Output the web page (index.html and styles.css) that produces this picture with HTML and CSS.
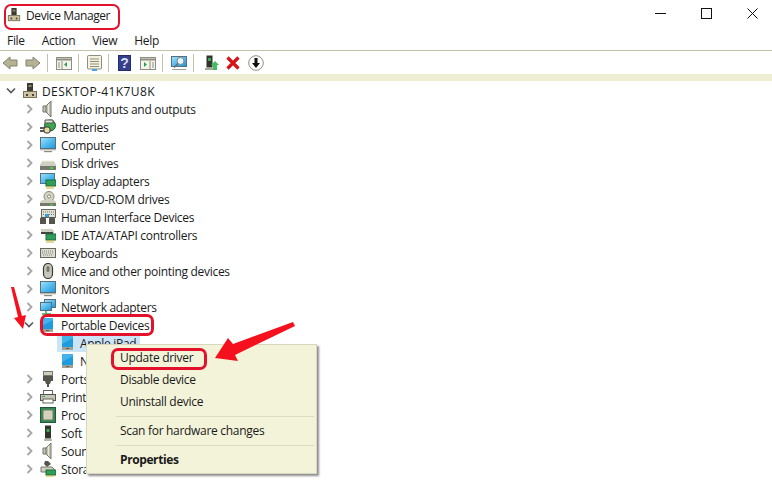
FILE: index.html
```html
<!DOCTYPE html>
<html lang="en">
<head>
<meta charset="utf-8">
<title>Device Manager</title>
<link rel="stylesheet" href="styles.css">
</head>
<body>
<svg width="0" height="0" class="defs">
  <defs>
    <linearGradient id="scr" x1="0" y1="0" x2="1" y2="1"><stop offset="0" stop-color="#a5e2fa"/><stop offset=".55" stop-color="#4fb9ec"/><stop offset="1" stop-color="#1f93d8"/></linearGradient>
    <symbol id="host" viewBox="0 0 16 16">
      <rect x="5" y="0" width="6" height="8" fill="#3c3a30"/>
      <rect x="6.500" y="2" width="3" height="2" fill="#8a8a70"/>
      <rect x="1.500" y="8.500" width="13" height="6" fill="#cfc39f" stroke="#77705a"/>
      <rect x="4" y="11" width="2" height="2" fill="#444"/><rect x="10" y="11" width="2" height="2" fill="#444"/>
    </symbol>
    <symbol id="chev" viewBox="0 0 8 10"><path d="M1.500 1l4 4-4 4" fill="none" stroke="#a6a6a6" stroke-width="1.800"/></symbol>
    <symbol id="chevd" viewBox="0 0 10 8"><path d="M1 1.500l4 4 4-4" fill="none" stroke="#595959" stroke-width="1.700"/></symbol>
    <symbol id="speaker" viewBox="0 0 16 16"><path d="M3 5h3l5-5v16l-5-5H3z" fill="#c4c4b6" stroke="#77776c"/><path d="M6 5v6" stroke="#6a6a60"/><path d="M8.500 3v10" stroke="#e8e8dc"/></symbol>
    <symbol id="battery" viewBox="0 0 16 16"><ellipse cx="10" cy="6.500" rx="5.500" ry="5.500" fill="#3fa552" stroke="#24542e"/><path d="M5 1h8v3H5z" fill="#dfe8d8" stroke="#555"/><path d="M0 9h5M0 12h5" stroke="#222" stroke-width="1.400"/><rect x="4" y="8" width="6" height="6" rx="2" fill="#e8d9a8" stroke="#333"/></symbol>
    <symbol id="monitor" viewBox="0 0 16 16"><rect x="0.500" y="0.500" width="15" height="11" fill="url(#scr)" stroke="#57707f"/><rect x="0" y="12" width="16" height="1.400" fill="#b8b8b0"/><rect x="4" y="14" width="8" height="1.200" fill="#8a8a80"/></symbol>
    <symbol id="disk" viewBox="0 0 16 16"><path d="M2 6h12l2 4v5H0v-5z" fill="#cfcfc0"/><rect x="0" y="11" width="16" height="4" fill="#77776c"/><rect x="10" y="12" width="3" height="2" fill="#3fd052"/><path d="M2 6h12" stroke="#eeeee4"/></symbol>
    <symbol id="display" viewBox="0 0 16 16"><rect x="0.500" y="0.500" width="14" height="10" fill="url(#scr)" stroke="#57707f"/><rect x="6" y="7" width="10" height="6" fill="#2f9e58" stroke="#1e6a3a"/><path d="M7 13v3M9 13v3M11 13v3M13 13v3" stroke="#c9b33a"/></symbol>
    <symbol id="dvd" viewBox="0 0 16 16"><circle cx="9" cy="5.500" r="5" fill="#d6d4c4" stroke="#8a8a78"/><circle cx="9" cy="5.500" r="1.600" fill="#fff" stroke="#8a8a78"/><path d="M2 9h12l2 2v4H0v-4z" fill="#cfcfc0"/><rect x="0" y="12" width="16" height="3" fill="#77776c"/><rect x="10" y="13" width="3" height="1.500" fill="#3fd052"/></symbol>
    <symbol id="hid" viewBox="0 0 16 16"><rect x="1.500" y="0.500" width="14" height="8" fill="#e0e0d4" stroke="#6a6a60"/><path d="M3 3h11M3 5.500h11" stroke="#77776c" stroke-dasharray="1 1"/><path d="M0 15V10c0-2 2-2 3-2s3 0 3 2v5zM9 15V10c0-2 2-2 3-2s3 0 3 2v5z" fill="#55554d"/><rect x="5" y="5" width="4" height="3" fill="#3a9bdc"/></symbol>
    <symbol id="ide" viewBox="0 0 16 16"><path d="M1 2h11l2 2v3H1z" fill="#cfcfc0"/><rect x="1" y="5" width="12" height="2" fill="#44443c"/><rect x="6" y="7" width="10" height="6" fill="#2f9e58" stroke="#1e6a3a"/><path d="M7 13v3M9 13v3M11 13v3M13 13v3" stroke="#c9b33a"/></symbol>
    <symbol id="keyboard" viewBox="0 0 16 16"><rect x="0.500" y="3.500" width="15" height="9" fill="#dcdcd0" stroke="#66665c"/><path d="M2 6h12M2 8h12M3 10h10" stroke="#85857a" stroke-dasharray="1 1"/></symbol>
    <symbol id="mouse" viewBox="0 0 16 16"><rect x="3.500" y="0.500" width="9" height="15" rx="4.500" fill="#c6c6ba" stroke="#3a3a34" stroke-width="1.200"/><rect x="6.500" y="3" width="3" height="6" rx="1.500" fill="#77776c"/></symbol>
    <symbol id="network" viewBox="0 0 16 16"><rect x="4.500" y="0.500" width="11" height="8" fill="url(#scr)" stroke="#57707f"/><rect x="0.500" y="3.500" width="11" height="8" fill="url(#scr)" stroke="#57707f"/><path d="M6 12v3M2 15h9" stroke="#36a852" stroke-width="1.400"/></symbol>
    <symbol id="tablet" viewBox="0 0 16 16"><rect x="2" y="1" width="11" height="14" fill="#a0a094"/><rect x="2" y="1" width="11" height="11" fill="#1f9ce0"/><path d="M2 1h11v2L2 9z" fill="#45b2ea"/><path d="M6 13.500h3" stroke="#5e5e54"/></symbol>
    <symbol id="ports" viewBox="0 0 16 16"><rect x="3.500" y="0.500" width="9" height="4" fill="#cfcfc0" stroke="#77776c"/><rect x="3" y="5" width="10" height="5" fill="#55554d"/><path d="M5 10h6l-1 3H6z" fill="#55554d"/><rect x="7" y="13" width="2" height="3" fill="#55554d"/></symbol>
    <symbol id="printer" viewBox="0 0 16 16"><rect x="3.500" y="1.500" width="9" height="4" fill="#fff" stroke="#66665c"/><rect x="0.500" y="5.500" width="15" height="6" fill="#c6c6ba" stroke="#55554d"/><rect x="3" y="10" width="10" height="4" fill="#fff" stroke="#66665c"/><rect x="2" y="7" width="3" height="1" fill="#3fa552"/></symbol>
    <symbol id="cpu" viewBox="0 0 16 16"><rect x="0.500" y="0.500" width="15" height="15" fill="#2f8a50" stroke="#1e5a34"/><rect x="3" y="3" width="10" height="10" fill="#d2d2bc" stroke="#77776c"/></symbol>
    <symbol id="software" viewBox="0 0 16 16"><rect x="5" y="0.500" width="6" height="13" fill="#33332d"/><rect x="6.500" y="4" width="3" height="3" fill="#3fa552"/><rect x="4" y="14" width="8" height="2" fill="#b8b8a8"/></symbol>
    <symbol id="storage" viewBox="0 0 16 16"><path d="M5 0h3l3 3-4 3-3-3z" fill="#55554d"/><path d="M1 6h11l2 2v3H1z" fill="#cfcfc0" stroke="#77776c"/><rect x="6" y="9" width="10" height="5" fill="#2f9e58" stroke="#1e6a3a"/><path d="M7 14v2M9 14v2M11 14v2M13 14v2" stroke="#c9b33a"/></symbol>
  </defs>
</svg>

<div class="window">
  <header class="titlebar">
    <svg class="title-icon"><use href="#host"/></svg>
    <span class="title-text">Device Manager</span>
    <div class="caption">
      <svg class="cap" viewBox="0 0 11 11"><path d="M0 5.500h11" stroke="#111" fill="none"/></svg>
      <svg class="cap" viewBox="0 0 11 11"><rect x="0.500" y="0.500" width="10" height="10" stroke="#111" fill="none"/></svg>
      <svg class="cap" viewBox="0 0 11 11"><path d="M0.500 0.500l10 10M10.500 0.500l-10 10" stroke="#111" fill="none"/></svg>
    </div>
  </header>
  <nav class="menubar">
    <span>File</span><span>Action</span><span>View</span><span>Help</span>
  </nav>
  <div class="toolbar">
    <svg class="tb t-arrow t-first" viewBox="0 0 16 14"><path d="M1 7l7-6v3h7v6H8v3z" fill="#b6b295" stroke="#85836d"/></svg>
    <svg class="tb t-arrow t-m7" viewBox="0 0 16 14"><path d="M15 7L8 1v3H1v6h7v3z" fill="#b6b295" stroke="#85836d"/></svg>
    <i class="sep"></i>
    <svg class="tb t-win" viewBox="0 0 16 13"><rect x="0.500" y="0.500" width="15" height="12" fill="#f4f4ec" stroke="#8e8e80"/><path d="M1 2.500h14" stroke="#8e8e80" stroke-width="2"/><path d="M6 4v8" stroke="#8e8e80"/><path d="M11 5l-3 2.500 3 2.500z" fill="#2f9e58"/><path d="M2 6h2M2 8h2M2 10h2" stroke="#8e8e80"/></svg>
    <i class="sep"></i>
    <svg class="tb t-prop" viewBox="0 0 15 16"><rect x="0.500" y="0.500" width="14" height="13.500" rx="1" fill="#f4f1dc" stroke="#8e8e80"/><path d="M3 4h9M3 6.500h9M3 9h9M3 11.500h9" stroke="#8e8e80"/><rect x="5" y="14" width="5" height="2" fill="#4aa3df"/></svg>
    <i class="sep"></i>
    <svg class="tb t-help t-m9" viewBox="0 0 13 16"><rect x="0.500" y="0.500" width="12" height="15" fill="#35408c" stroke="#252c66"/><text x="6.500" y="12.500" class="q">?</text></svg>
    <svg class="tb t-win t-m9" viewBox="0 0 16 13"><rect x="0.500" y="0.500" width="15" height="12" fill="#f4f4ec" stroke="#8e8e80"/><path d="M1 2.500h14" stroke="#8e8e80" stroke-width="2"/><path d="M10 4v8" stroke="#8e8e80"/><path d="M4 5l3 2.500-3 2.500z" fill="#2f9e58"/><path d="M12 6h2M12 8h2M12 10h2" stroke="#8e8e80"/></svg>
    <i class="sep"></i>
    <svg class="tb t-mon" viewBox="0 0 16 15"><rect x="0.500" y="0.500" width="15" height="10" fill="url(#scr)" stroke="#57707f"/><circle cx="9.500" cy="5" r="3.500" fill="#e8f4f8" stroke="#7a8a90"/><path d="M7 7.500l-4 4" stroke="#666" stroke-width="1.300"/><path d="M1 13.500h14" stroke="#a0a094"/></svg>
    <i class="sep"></i>
    <svg class="tb t-add t-m11" viewBox="0 0 14 16"><rect x="1.500" y="0.500" width="6" height="12" fill="#33332d"/><rect x="3" y="3" width="3" height="3" fill="#3fa552"/><rect x="0" y="13" width="9" height="2" fill="#a8a898"/><path d="M10 6l4 4h-2v5H8v-5H6z" fill="#3fbf5c"/></svg>
    <svg class="tb t-x t-m7" viewBox="0 0 14 14"><path d="M1.500 1.500l11 11M12.500 1.500l-11 11" stroke="#d61418" stroke-width="3.200" fill="none"/></svg>
    <svg class="tb t-down" viewBox="0 0 16 16"><circle cx="8" cy="8" r="7.300" fill="#fff" stroke="#8e8e80"/><path d="M6.500 3h3v5H12l-4 5-4-5h2.500z" fill="#111"/></svg>
  </div>
  <div class="band"></div>
  <ul class="tree">
    <li class="row root"><svg class="tw"><use href="#chevd"/></svg><svg class="ic"><use href="#host"/></svg><span>DESKTOP-41K7U8K</span></li>
    <li class="row"><svg class="tc"><use href="#chev"/></svg><svg class="ic"><use href="#speaker"/></svg><span>Audio inputs and outputs</span></li>
    <li class="row"><svg class="tc"><use href="#chev"/></svg><svg class="ic"><use href="#battery"/></svg><span>Batteries</span></li>
    <li class="row"><svg class="tc"><use href="#chev"/></svg><svg class="ic"><use href="#monitor"/></svg><span>Computer</span></li>
    <li class="row"><svg class="tc"><use href="#chev"/></svg><svg class="ic"><use href="#disk"/></svg><span>Disk drives</span></li>
    <li class="row"><svg class="tc"><use href="#chev"/></svg><svg class="ic"><use href="#display"/></svg><span>Display adapters</span></li>
    <li class="row"><svg class="tc"><use href="#chev"/></svg><svg class="ic"><use href="#dvd"/></svg><span>DVD/CD-ROM drives</span></li>
    <li class="row"><svg class="tc"><use href="#chev"/></svg><svg class="ic"><use href="#hid"/></svg><span>Human Interface Devices</span></li>
    <li class="row"><svg class="tc"><use href="#chev"/></svg><svg class="ic"><use href="#ide"/></svg><span>IDE ATA/ATAPI controllers</span></li>
    <li class="row"><svg class="tc"><use href="#chev"/></svg><svg class="ic"><use href="#keyboard"/></svg><span>Keyboards</span></li>
    <li class="row"><svg class="tc"><use href="#chev"/></svg><svg class="ic"><use href="#mouse"/></svg><span>Mice and other pointing devices</span></li>
    <li class="row"><svg class="tc"><use href="#chev"/></svg><svg class="ic"><use href="#monitor"/></svg><span>Monitors</span></li>
    <li class="row"><svg class="tc"><use href="#chev"/></svg><svg class="ic"><use href="#network"/></svg><span>Network adapters</span></li>
    <li class="row"><svg class="tw tw-open"><use href="#chevd"/></svg><svg class="ic"><use href="#tablet"/></svg><span>Portable Devices</span></li>
    <li class="row child"><div class="leaf selected"><svg class="ic"><use href="#tablet"/></svg><span>Apple iPad</span></div></li>
    <li class="row child"><div class="leaf"><svg class="ic"><use href="#tablet"/></svg><span>N</span></div></li>
    <li class="row"><svg class="tc"><use href="#chev"/></svg><svg class="ic"><use href="#ports"/></svg><span>Ports</span></li>
    <li class="row"><svg class="tc"><use href="#chev"/></svg><svg class="ic"><use href="#printer"/></svg><span>Print</span></li>
    <li class="row"><svg class="tc"><use href="#chev"/></svg><svg class="ic"><use href="#cpu"/></svg><span>Proc</span></li>
    <li class="row"><svg class="tc"><use href="#chev"/></svg><svg class="ic"><use href="#software"/></svg><span>Soft</span></li>
    <li class="row"><svg class="tc"><use href="#chev"/></svg><svg class="ic"><use href="#speaker"/></svg><span>Soun</span></li>
    <li class="row"><svg class="tc"><use href="#chev"/></svg><svg class="ic"><use href="#storage"/></svg><span>Stora</span></li>
  </ul>
</div>

<div class="menu">
  <div class="item">Update driver</div>
  <div class="item">Disable device</div>
  <div class="item">Uninstall device</div>
  <hr class="rule">
  <div class="item">Scan for hardware changes</div>
  <hr class="rule">
  <div class="item strong">Properties</div>
</div>

<div class="mark mark-title"></div>
<div class="mark mark-portable"></div>
<div class="mark mark-update"></div>
<svg class="arrows" viewBox="0 0 772 482">
  <path d="M11 287h3l8 29 4-1-3 14-9-11 4-1z" fill="#f5101e"/>
  <path d="M293 322l2 4-60 29 3 6-23-3 13-20 5 6z" fill="#f5101e"/>
</svg>
</body>
</html>
```
FILE: styles.css
```css
* { box-sizing: border-box; }
html, body { margin: 0; padding: 0; }
body {
  width: 772px; height: 482px; overflow: hidden; background: #fff; position: relative;
  font-family: "Open Sans", "Noto Sans", sans-serif; font-size: 12px; color: #1a1a1a;
  letter-spacing: -.3px;
}
.defs { position: absolute; }
.window { display: flex; flex-direction: column; height: 482px; }
.titlebar { height: 30px; display: flex; align-items: center; padding-left: 7px; flex: none; }
.title-icon { width: 14px; height: 14px; margin-right: 5px; }
.title-text { font-size: 12px; letter-spacing: -.4px; }
.caption { margin-left: auto; display: flex; gap: 35px; padding-right: 14px; margin-top: -4px; }
.cap { width: 11px; height: 11px; }
.menubar { height: 21px; display: flex; align-items: center; gap: 17px; padding-left: 7px; border-bottom: 1px solid #c4c2aa; flex: none; }
.toolbar { height: 23px; display: flex; align-items: center; padding: 1px 0 0 2px; flex: none; }
.tb { flex: none; margin-left: 8px; }
.t-first { margin-left: 0; }
.t-m7 { margin-left: 7px; }
.t-m9 { margin-left: 9px; }
.t-m11 { margin-left: 11px; }
.t-arrow { width: 16px; height: 14px; }
.t-win { width: 16px; height: 13px; }
.t-prop { width: 15px; height: 16px; }
.t-help { width: 13px; height: 16px; }
.t-mon { width: 16px; height: 15px; }
.t-add { width: 14px; height: 16px; }
.t-x { width: 14px; height: 14px; }
.t-down { width: 16px; height: 16px; }
.q { font: bold 14px "Liberation Sans", sans-serif; fill: #dcdcf0; text-anchor: middle; }
.sep { width: 1px; height: 18px; background: #c4c2aa; flex: none; margin-left: 6px; }
.band { height: 7px; background: #eeeed2; flex: none; }
.tree { list-style: none; margin: 0; padding: 1px 0 0 0; flex: 1; overflow: hidden; }
.row { height: 18px; display: flex; align-items: center; padding-left: 26px; white-space: nowrap; }
.row.root { padding-left: 6px; letter-spacing: .38px; }
.row.child { padding-left: 57px; }
.tc { width: 8px; height: 10px; margin-right: 6px; }
.tw { width: 10px; height: 8px; margin-right: 5px; margin-left: -1px; }
.tw-open { margin-right: 6px; margin-left: -2px; }
.ic { width: 16px; height: 16px; margin-right: 5px; flex: none; }
.root .tw { margin-right: 6px; margin-left: 0; }
.root .ic { margin-right: 4px; }
.leaf { width: 83px; height: 18px; display: flex; align-items: center; padding-left: 3px; }
.leaf .ic { margin-right: 4px; }
.selected { background: #cce4f7; }
.menu {
  position: absolute; left: 86px; top: 344px; width: 231px; height: 130px;
  background: #f3f3d9; border: 1px solid #d8d8c0; box-shadow: 2px 2px 2px rgba(0,0,0,.45);
  padding: 2px 0 0 0;
}
.item { height: 22px; line-height: 22px; padding-left: 33px; }
.strong { font-weight: 700; letter-spacing: -.4px; }
.rule { border: 0; border-top: 1px solid #dcdcc4; margin: 3px 2px 3px 29px; }
.mark { position: absolute; border: 3px solid #e3122a; border-radius: 7px; }
.mark-title { left: 4px; top: 4px; width: 116px; height: 26px; border-width: 2px; }
.mark-portable { left: 40px; top: 314px; width: 114px; height: 22px; }
.mark-update { left: 111px; top: 348px; width: 96px; height: 22px; }
.arrows { position: absolute; left: 0; top: 0; width: 772px; height: 482px; pointer-events: none; }
```
